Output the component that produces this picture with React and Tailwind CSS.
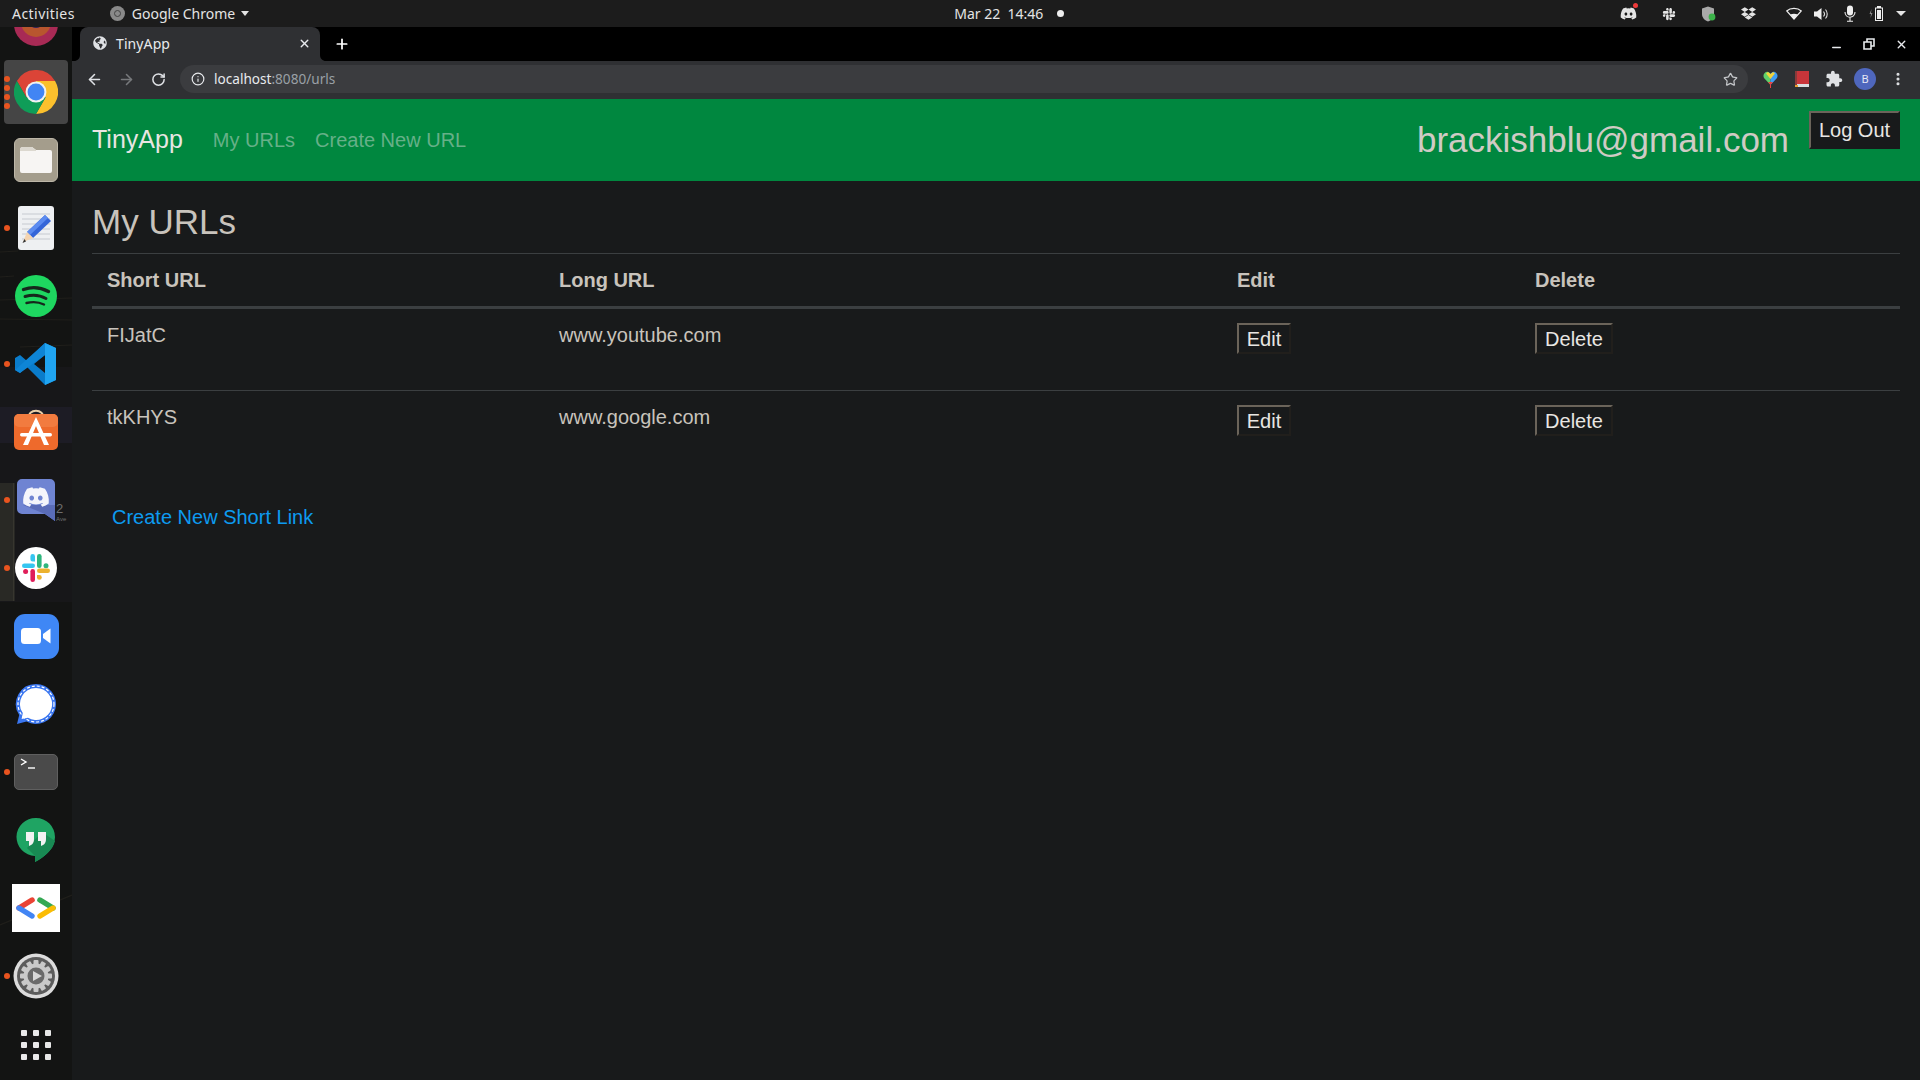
import React from "react";
import { FaDiscord, FaSlack, FaDropbox, FaGlobeAmericas } from "react-icons/fa";
import { X, Plus, ArrowLeft, ArrowRight, RotateCw, Info, Star, Minus, EllipsisVertical } from "lucide-react";

const SANS = "[font-family:'Noto_Sans',sans-serif]";

function ChromeLogo({ size = 44 }) {
  return (
    <svg width={size} height={size} viewBox="0 0 48 48">
      <path d="M24 24 L24 12 L44.8 12 A24 24 0 0 0 3.2 12 L13.6 30 Z" fill="#db4437" />
      <path d="M24 24 L34.4 30 L24 48 A24 24 0 0 0 44.8 12 L24 12 Z" fill="#fbc02d" />
      <path d="M24 24 L13.6 30 L3.2 12 A24 24 0 0 0 24 48 L34.4 30 Z" fill="#0f9d58" />
      <circle cx="24" cy="24" r="11.4" fill="#f1f1f1" />
      <circle cx="24" cy="24" r="9.2" fill="#4285f4" />
    </svg>
  );
}

function FilesIcon() {
  return (
    <div className="w-[44px] h-[44px] rounded-[6px] bg-[#a49d8c] border border-[#bdb7a8] flex items-center justify-center">
      <svg width="34" height="28" viewBox="0 0 34 28">
        <path d="M1 4 a3 3 0 0 1 3-3 h9 l4 3 h14 a2 2 0 0 1 2 2 v19 a2 2 0 0 1-2 2 H3 a2 2 0 0 1-2-2 Z" fill="#f7f5f3" />
        <path d="M1 4 a3 3 0 0 1 3-3 h9 l4 3 v1 H1 Z" fill="#dcd8cf" />
      </svg>
    </div>
  );
}

function EditorIcon() {
  return (
    <svg width="38" height="46" viewBox="0 0 38 46">
      <rect x="1" y="1" width="36" height="44" rx="3" fill="#eef0f2" />
      <g stroke="#c6cad0" strokeWidth="1">
        <path d="M5 9H33M5 14H33M5 19H33M5 24H33M5 29H33M5 34H33" />
      </g>
      <path d="M28 10 L34 16 L16 33 L10 27 Z" fill="#3465d8" />
      <path d="M28 10 L31 13 L13 30 L10 27 Z" fill="#5b8bf0" />
      <path d="M10 27 L16 33 L6 37 Z" fill="#f4d4b0" />
      <path d="M7.5 34 L9 36.4 L5.5 38 Z" fill="#333" />
    </svg>
  );
}

function SpotifyIcon() {
  return (
    <svg width="44" height="44" viewBox="0 0 44 44">
      <circle cx="22" cy="22" r="21" fill="#1ed760" />
      <g fill="none" stroke="#16271c" strokeLinecap="round">
        <path d="M9.5 15.5 C18 12.5 27 13.5 34.5 17.5" strokeWidth="3.4" />
        <path d="M11 22.5 C18 20.5 26 21 32 24.5" strokeWidth="2.9" />
        <path d="M12.5 29 C18.5 27.5 25 28 30 30.5" strokeWidth="2.4" />
      </g>
    </svg>
  );
}

function VSCodeIcon() {
  return (
    <svg width="44" height="44" viewBox="0 0 44 44">
      <path d="M31 1 L42 6 V38 L31 43 L13 25 L6 31 L1 28 V16 L6 13 L13 19 Z M31 13 L20 22 L31 31 Z" fill="#0a7ccb" fillRule="evenodd" />
      <path d="M31 1 L42 6 V38 L31 43 Z" fill="#20a5f2" />
      <path d="M1 28 L31 1 V13 L6 31 Z" fill="#0e85d6" />
    </svg>
  );
}

function SoftwareIcon() {
  return (
    <svg width="46" height="50" viewBox="0 0 46 50">
      <path d="M15 12 C15 1 31 1 31 12" fill="none" stroke="#e8cfa8" strokeWidth="2" />
      <rect x="1" y="7" width="44" height="36" rx="5" fill="#ee6a2c" />
      <rect x="1" y="7" width="44" height="13" rx="5" fill="#f27b3f" />
      <path d="M23 10 L36 38 H31 L23 19 L15 38 H10 Z" fill="#fff" />
      <rect x="7" y="26" width="32" height="3.4" rx="1.7" fill="#fff" />
    </svg>
  );
}

function DiscordIcon() {
  return (
    <div className="relative w-[38px] h-[42px]">
      <svg width="38" height="42" viewBox="0 0 38 42" className="absolute inset-0">
        <path d="M5 0 H33 a5 5 0 0 1 5 5 V42 L28 35 H5 a5 5 0 0 1-5-5 V5 a5 5 0 0 1 5-5 Z" fill="#6f84d2" />
        <path d="M6 26 L28 35 L38 42 V26 Z" fill="#5a6cb8" />
      </svg>
      <FaDiscord className="absolute left-[5px] top-[4px] text-[#f4f5fb]" size={28} />
    </div>
  );
}

function SlackIcon() {
  return (
    <div className="w-[42px] h-[42px] rounded-full bg-white flex items-center justify-center">
      <svg width="30" height="30" viewBox="0 0 30 30">
        <g fill="#36c5f0"><rect x="1" y="10.5" width="13" height="4.6" rx="2.3" /><path d="M9.4 3.4 a2.3 2.3 0 0 1 4.6 0 v5.2 h-2.4 a2.3 2.3 0 0 1-2.2-2.3 Z" /></g>
        <g fill="#2eb67d"><rect x="16" y="1" width="4.6" height="14" rx="2.3" /><circle cx="25" cy="12.8" r="2.5" /></g>
        <g fill="#e01e5a"><rect x="9.4" y="16" width="4.6" height="13" rx="2.3" /><circle cx="4.6" cy="18.4" r="2.5" /></g>
        <g fill="#ecb22e"><rect x="16" y="15.5" width="13" height="4.6" rx="2.3" /><path d="M16 22 h2.4 a2.4 2.4 0 1 1-2.4 2.4 Z" /></g>
      </svg>
    </div>
  );
}

function ZoomIcon() {
  return (
    <div className="w-[45px] h-[45px] rounded-[11px] bg-[#3f87f5] flex items-center justify-center">
      <svg width="30" height="18" viewBox="0 0 30 18">
        <rect x="0" y="1" width="20" height="16" rx="3.5" fill="#fff" />
        <path d="M22 7 L29.5 1.5 V16.5 L22 11 Z" fill="#fff" />
      </svg>
    </div>
  );
}

function SignalIcon() {
  return (
    <svg width="44" height="44" viewBox="0 0 44 44">
      <path d="M22 2 a20 20 0 1 1-9.5 37.6 L3 42 L5.2 33 A20 20 0 0 1 22 2 Z" fill="#3a76f0" />
      <path d="M22 6 a16 16 0 1 1-8 29.8 L7.6 37 L8.8 31 A16 16 0 0 1 22 6 Z" fill="#fff" />
      <circle cx="22" cy="22" r="18" fill="none" stroke="#fff" strokeWidth="1.2" strokeDasharray="3 2" />
    </svg>
  );
}

function TerminalIcon() {
  return (
    <div className="relative w-[44px] h-[36px] rounded-[5px] bg-[#4a4a4a] border border-[#5f5f5f]">
      <svg width="18" height="14" viewBox="0 0 18 14" className="absolute left-[5px] top-[3px]">
        <path d="M1 1 L6 4 L1 7" fill="none" stroke="#fff" strokeWidth="1.4" />
        <path d="M8 10 H15" stroke="#fff" strokeWidth="1.4" />
      </svg>
    </div>
  );
}

function HangoutsIcon() {
  return (
    <svg width="40" height="46" viewBox="0 0 40 46">
      <path d="M20 1 a19 19 0 0 1 19 19 C39 31 29 40 19 45 V39 A19 19 0 0 1 20 1 Z" fill="#1fa463" />
      <path d="M26 15 L39 24 C37 33 28 40 19 45 V39 L11 31 Z" fill="#188a53" />
      <path d="M10 15 H18 V22 C18 26 16 28 13 29 V24 H10 Z M22 15 H30 V22 C30 26 28 28 25 29 V24 H22 Z" fill="#f2f2f2" />
    </svg>
  );
}

function GDevIcon() {
  return (
    <div className="w-[48px] h-[48px] bg-white flex items-center justify-center">
      <svg width="40" height="22" viewBox="0 0 40 22">
        <g strokeWidth="5.4" strokeLinecap="round" fill="none">
          <path d="M3 11 L16 3" stroke="#ea4335" />
          <path d="M3 11 L16 19" stroke="#4285f4" />
          <path d="M24 3 L37 11" stroke="#34a853" />
          <path d="M37 11 L24 19" stroke="#fbbc04" />
        </g>
      </svg>
    </div>
  );
}

function SettingsIcon() {
  const teeth = [0, 30, 60, 90, 120, 150];
  return (
    <svg width="46" height="46" viewBox="0 0 46 46">
      <circle cx="23" cy="23" r="22.5" fill="#dcdcdc" />
      <circle cx="23" cy="23" r="19" fill="#5c5c5c" />
      <g fill="#c9c9c9">
        {teeth.map((a) => (
          <rect key={a} x="20.5" y="7" width="5" height="32" rx="1" transform={`rotate(${a} 23 23)`} />
        ))}
      </g>
      <circle cx="23" cy="23" r="12.5" fill="#c9c9c9" />
      <circle cx="23" cy="23" r="8.5" fill="#6a6a6a" />
      <path d="M20 18 L29 23 L20 28 Z" fill="#d8d8d8" />
    </svg>
  );
}

function AppGrid() {
  return (
    <div className="grid grid-cols-3 gap-x-[6px] gap-y-[6px] translate-y-[1px]">
      {Array.from({ length: 9 }).map((_, i) => (
        <span key={i} className="w-[6px] h-[6px] rounded-[1px] bg-[#e8e8e8]" />
      ))}
    </div>
  );
}

function DockItem({ children, dots = 0, active = false }) {
  return (
    <div className="relative h-[68px] w-[72px] shrink-0 flex items-center justify-center">
      {active && <div className="absolute left-[4px] top-[2px] w-[64px] h-[64px] rounded-[4px] bg-[#454545]" />}
      {dots > 0 && (
        <div className="absolute left-[4px] top-0 h-full flex flex-col justify-center gap-[3px]">
          {Array.from({ length: dots }).map((_, i) => (
            <span key={i} className="w-[6px] h-[6px] rounded-full bg-[#e9541f]" />
          ))}
        </div>
      )}
      <div className="relative">{children}</div>
    </div>
  );
}

function DockWallpaper() {
  return (
    <svg width="72" height="1053" viewBox="0 0 72 1053" className="absolute left-0 top-0">
      <rect width="72" height="1053" fill="#131413" />
      <rect x="0" y="340" width="72" height="235" fill="#171719" />
      <rect x="0" y="380" width="72" height="36" fill="#1d1c25" />
      <rect x="0" y="456" width="13" height="118" fill="#292925" />
      <rect x="13" y="456" width="1.5" height="118" fill="#37362f" />
      <text x="56" y="486" fontSize="13" fontFamily="Liberation Sans" fill="#6e6e6e">2</text>
      <text x="56" y="493" fontSize="6" fontFamily="Liberation Sans" fill="#6e6e6e" dy="1">Ave</text>
      <g stroke="#201f1b" strokeWidth="1.2">
        <path d="M0 225 L18 224 M0 250 L14 249 M0 273 L72 271 M0 292 L72 293 M20 320 L72 318" />
        <path d="M0 898 L72 868" />
      </g>
    </svg>
  );
}

function Dock() {
  return (
    <div className="relative w-[72px] h-full bg-[#131413] overflow-hidden shrink-0">
      <DockWallpaper />
      <div className="relative flex flex-col -mt-[37px]">
        <DockItem>
          <svg width="44" height="44" viewBox="0 0 44 44">
            <circle cx="22" cy="22" r="22" fill="#a82a55" />
            <circle cx="22" cy="20" r="15" fill="#b8562e" />
            <circle cx="22" cy="18" r="8" fill="#33245a" />
          </svg>
        </DockItem>
        <DockItem dots={4} active><ChromeLogo /></DockItem>
        <DockItem><FilesIcon /></DockItem>
        <DockItem dots={1}><EditorIcon /></DockItem>
        <DockItem><SpotifyIcon /></DockItem>
        <DockItem dots={1}><VSCodeIcon /></DockItem>
        <DockItem><SoftwareIcon /></DockItem>
        <DockItem dots={1}><DiscordIcon /></DockItem>
        <DockItem dots={1}><SlackIcon /></DockItem>
        <DockItem><ZoomIcon /></DockItem>
        <DockItem><SignalIcon /></DockItem>
        <DockItem dots={1}><TerminalIcon /></DockItem>
        <DockItem><HangoutsIcon /></DockItem>
        <DockItem><GDevIcon /></DockItem>
        <DockItem dots={1}><SettingsIcon /></DockItem>
        <DockItem><AppGrid /></DockItem>
      </div>
    </div>
  );
}

function TopBar() {
  return (
    <div className={`relative h-[27px] shrink-0 bg-[#1c1c1c] flex items-center text-[#e4e4e4] text-[14px] ${SANS}`}>
      <span className="ml-[12px] tracking-[0.45px]">Activities</span>
      <div className="ml-[35px] flex items-center">
        <span className="w-[15px] h-[15px] rounded-full bg-[#8a8a8a] flex items-center justify-center">
          <span className="w-[7px] h-[7px] rounded-full border border-[#444]" />
        </span>
        <span className="ml-[7px]">Google Chrome</span>
        <span className="ml-[6px] w-0 h-0 border-x-[4.5px] border-x-transparent border-t-[5px] border-t-[#e4e4e4]" />
      </div>
      <div className="ml-[705px] flex items-center">
        <span className="whitespace-pre">Mar 22  14:46</span>
        <span className="ml-[14px] w-[7px] h-[7px] rounded-full bg-[#eee]" />
      </div>
      <div className="ml-auto flex items-center pr-[14px] text-[#e4e4e4]">
        <span className="relative">
          <FaDiscord size={17} />
          <span className="absolute -right-[1px] -top-[2px] w-[5px] h-[5px] rounded-full bg-[#ee3a3a]" />
        </span>
        <FaSlack size={14} className="ml-[25px]" />
        <svg width="14" height="16" viewBox="0 0 14 16" className="ml-[26px]">
          <path d="M6 0.5 L12 2.5 V8 C12 12 9 14.5 6 15.5 C3 14.5 0 12 0 8 V2.5 Z" fill="#a9a9a9" />
          <circle cx="10" cy="11" r="3.4" fill="#3cb34a" />
        </svg>
        <FaDropbox size={15} className="ml-[25px]" />
        <svg width="16" height="13" viewBox="0 0 16 13" className="ml-[30px]">
          <path d="M8 12 L0.7 4 C4.5 0.5 11.5 0.5 15.3 4 Z" fill="none" stroke="#eee" strokeWidth="1.2" />
          <path d="M8 12 L4.2 7.6 C6.5 6.4 9.5 6.4 11.8 7.6 Z" fill="#eee" />
        </svg>
        <svg width="15" height="14" viewBox="0 0 15 14" className="ml-[12px]">
          <path d="M0 4.5 H3 L7.5 1 V13 L3 9.5 H0 Z" fill="#eee" />
          <path d="M9.5 4.5 C10.8 6 10.8 8 9.5 9.5 M11.5 2.5 C13.8 5 13.8 9 11.5 11.5" fill="none" stroke="#ddd" strokeWidth="1.1" />
        </svg>
        <svg width="12" height="17" viewBox="0 0 12 17" className="ml-[15px]">
          <rect x="3" y="0.5" width="6" height="10" rx="3" fill="#eee" />
          <path d="M1 7 C1 14 11 14 11 7 M6 12.5 V16 M3 16.3 H9" fill="none" stroke="#eee" strokeWidth="1.1" />
        </svg>
        <svg width="15" height="15" viewBox="0 0 15 15" className="ml-[13px]">
          <path d="M2.5 3 L0.5 8 H2 L1.5 12 L3.5 7 H2 Z" fill="#888" />
          <rect x="6.5" y="2" width="7" height="12.5" fill="none" stroke="#eee" strokeWidth="1" />
          <rect x="8" y="0" width="4" height="2" fill="#eee" />
          <rect x="8" y="4" width="4" height="9" fill="#eee" />
        </svg>
        <span className="ml-[12px] w-0 h-0 border-x-[5px] border-x-transparent border-t-[5px] border-t-[#e4e4e4]" />
      </div>
    </div>
  );
}

function TabStrip() {
  return (
    <div className="h-[34px] shrink-0 bg-black flex items-center">
      <div className={`relative ml-[8px] h-[34px] w-[240px] rounded-t-[8px] bg-[#2f3033] flex items-center pb-[2px] text-[#e8eaed] text-[14px] ${SANS}`}>
        <svg width="6" height="6" viewBox="0 0 6 6" className="absolute -left-[6px] bottom-0">
          <path d="M6 0 V6 H0 C3.5 6 6 3.5 6 0 Z" fill="#2f3033" />
        </svg>
        <svg width="6" height="6" viewBox="0 0 6 6" className="absolute -right-[6px] bottom-0">
          <path d="M0 0 V6 H6 C2.5 6 0 3.5 0 0 Z" fill="#2f3033" />
        </svg>
        <FaGlobeAmericas size={14} className="ml-[13px] text-[#dfe1e5]" />
        <span className="ml-[9px] tracking-[0.1px]">TinyApp</span>
        <X size={13} className="ml-auto mr-[9px]" strokeWidth={2.6} />
      </div>
      <Plus size={16} className="ml-[14px] text-white" strokeWidth={2.6} />
      <div className="ml-auto flex items-center text-[#e8eaed]">
        <Minus size={13} strokeWidth={2.6} className="translate-y-[3px]" />
        <svg width="12" height="12" viewBox="0 0 12 12" className="ml-[20px]">
          <path d="M1 4 H8 V11 H1 Z M4 4 V1 H11 V8 H8" fill="none" stroke="#e8eaed" strokeWidth="1.6" />
        </svg>
        <X size={13} className="ml-[20px] mr-[12px]" strokeWidth={2.6} />
      </div>
    </div>
  );
}

function ToolBar() {
  return (
    <div className="h-[38px] shrink-0 bg-[#2f3033] flex items-center pb-[2px]">
      <ArrowLeft size={17} className="ml-[14px] text-[#dfe1e5]" strokeWidth={2.2} />
      <ArrowRight size={17} className="ml-[15px] text-[#77797c]" strokeWidth={2.2} />
      <RotateCw size={15} className="ml-[16px] text-[#dfe1e5]" strokeWidth={2.4} />
      <div className="ml-[14px] h-[28px] w-[1568px] rounded-full bg-[#3b3c3f] flex items-center">
        <Info size={14} className="ml-[11px] text-[#e8eaed]" strokeWidth={2} />
        <span className={`ml-[9px] text-[13.6px] text-[#9aa0a6] ${SANS}`}>
          <span className="text-[#e8eaed]">localhost</span>:8080/urls
        </span>
        <Star size={15} className="ml-auto mr-[10px] text-[#c4c6c9]" strokeWidth={2} />
      </div>
      <div className="flex items-center flex-1 pl-[15px]">
        <svg width="15" height="17" viewBox="0 0 15 17">
          <path d="M7.5 14 L1 7 C-1 3 3 0 5 1 C6 1.4 7 2 7.5 3 Z" fill="#5fd06a" />
          <path d="M7.5 14 L14 7 C16 3 12 0 10 1 C9 1.4 8 2 7.5 3 Z" fill="#3d9df5" />
          <path d="M7.5 3 L5 1 L3 2.5 L7.5 8 L12 2.5 L10 1 Z" fill="#f0d33c" />
          <path d="M7.5 14 L5 11 H10 Z" fill="#ef4040" />
          <rect x="7" y="14" width="1" height="3" fill="#ef4040" />
        </svg>
        <svg width="14" height="16" viewBox="0 0 14 16" className="ml-[17px]">
          <rect x="1" y="0" width="13" height="14" fill="#c8353a" />
          <rect x="0" y="0" width="2" height="16" fill="#8a3a3a" />
          <rect x="2" y="13" width="12" height="3" fill="#d8dde0" />
          <rect x="0" y="14" width="3" height="2" fill="#e8a030" />
        </svg>
        <svg width="18" height="18" viewBox="0 0 24 24" className="ml-[16px]">
          <path d="M20.5 11H19V7c0-1.1-.9-2-2-2h-4V3.5C13 2.12 11.88 1 10.5 1S8 2.12 8 3.5V5H4c-1.1 0-1.99.9-1.99 2v3.8H3.5c1.49 0 2.7 1.21 2.7 2.7s-1.21 2.7-2.7 2.7H2V20c0 1.1.9 2 2 2h3.8v-1.5c0-1.49 1.21-2.7 2.7-2.7 1.49 0 2.7 1.21 2.7 2.7V22H17c1.1 0 2-.9 2-2v-4h1.5c1.38 0 2.5-1.12 2.5-2.5S21.88 11 20.5 11z" fill="#e0e2e5" />
        </svg>
        <span className={`ml-[11px] w-[22px] h-[22px] rounded-full bg-[#4f67bd] flex items-center justify-center text-[11px] text-[#e6e8f5] ${SANS}`}>B</span>
        <EllipsisVertical size={16} className="ml-[14px] text-[#e0e2e5]" strokeWidth={2.6} />
      </div>
    </div>
  );
}

function NavBar() {
  return (
    <div className="h-[82px] shrink-0 bg-[#00873f] flex items-start pl-[20px] pr-[20px]">
      <span className="mt-[24px] text-[25px] leading-[32px] text-[#e8e6e3]">TinyApp</span>
      <span className="ml-[30px] mt-[26px] text-[20px] leading-[30px] text-[#66b088]">My URLs</span>
      <span className="ml-[20px] mt-[26px] text-[20px] leading-[30px] text-[#66b088]">Create New URL</span>
      <span className="ml-auto mt-[18px] text-[35px] leading-[46px] text-[#cfcbc4]">brackishblu@gmail.com</span>
      <button className="ml-[20px] mt-[12px] h-[38px] w-[91px] bg-[#181a1b] border-2 border-t-[#6b645a] border-l-[#6b645a] border-r-[#181a1b] border-b-[#181a1b] text-[20px] text-[#e8e6e3]">
        Log Out
      </button>
    </div>
  );
}

function RowButton({ children, w }) {
  return (
    <button className={`block h-[31px] ${w} bg-[#181a1b] border-2 border-t-[#6b645a] border-l-[#6b645a] border-r-[#211f1c] border-b-[#211f1c] text-[20px] leading-[26px] text-[#e8e6e3]`}>
      {children}
    </button>
  );
}

const rows = [
  { short: "FIJatC", long: "www.youtube.com" },
  { short: "tkKHYS", long: "www.google.com" },
];

function Content() {
  return (
    <div className="flex-1 bg-[#181a1b] px-[20px] pt-[19px]">
      <h1 className="text-[35px] leading-[43px] text-[#c8c3bc]">My URLs</h1>
      <table className="mt-[10px] w-full table-fixed border-collapse text-[20px] leading-[30px] text-[#c8c3bc]">
        <colgroup>
          <col className="w-[452px]" />
          <col className="w-[678px]" />
          <col className="w-[298px]" />
          <col />
        </colgroup>
        <thead>
          <tr className="border-t border-t-[#3b3f41] border-b-[3px] border-b-[#3b3f41] text-left">
            <th className="px-[15px] pb-[11px] pt-[11px] font-bold">Short URL</th>
            <th className="px-[15px] pb-[11px] pt-[11px] font-bold">Long URL</th>
            <th className="px-[15px] pb-[11px] pt-[11px] font-bold">Edit</th>
            <th className="px-[15px] pb-[11px] pt-[11px] font-bold">Delete</th>
          </tr>
        </thead>
        <tbody>
          {rows.map((r, i) => (
            <tr key={r.short} className={i === 0 ? "border-b border-b-[#3b3f41]" : ""}>
              <td className="h-[83px] px-[15px] pt-[11px] align-top">{r.short}</td>
              <td className="h-[83px] px-[15px] pt-[11px] align-top">{r.long}</td>
              <td className="h-[83px] px-[15px] pt-[14px] align-top"><RowButton w="w-[54px]">Edit</RowButton></td>
              <td className="h-[83px] px-[15px] pt-[14px] align-top"><RowButton w="w-[78px]">Delete</RowButton></td>
            </tr>
          ))}
        </tbody>
      </table>
      <a className="block mt-[28px] ml-[20px] text-[20px] leading-[30px] text-[#0d9bf0]">Create New Short Link</a>
    </div>
  );
}

export default function App() {
  return (
    <div className="w-[1920px] h-[1080px] flex flex-col overflow-hidden font-['Liberation_Sans',Arial,sans-serif] bg-[#181a1b]">
      <TopBar />
      <div className="flex-1 flex min-h-0">
        <Dock />
        <div className="flex-1 flex flex-col min-w-0">
          <TabStrip />
          <ToolBar />
          <NavBar />
          <Content />
        </div>
      </div>
    </div>
  );
}
